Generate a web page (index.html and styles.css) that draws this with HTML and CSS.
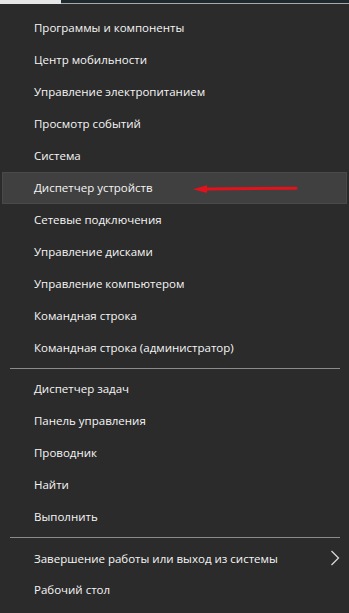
FILE: index.html
```html
<!DOCTYPE html>
<html>
<head>
	<title>Win+X</title>
	<meta charset="utf-8">
	<link rel="stylesheet" href="styles.css">
</head>
<body>
	<div class="top_strip">
		<div class="strip_light"></div>
		<div class="strip_dark"></div>
	</div>
	<div class="menu">
		<div class="group">
			<div class="menu_item">Программы и компоненты</div>
			<div class="menu_item">Центр мобильности</div>
			<div class="menu_item">Управление электропитанием</div>
			<div class="menu_item">Просмотр событий</div>
			<div class="menu_item">Система</div>
			<div class="menu_item active">Диспетчер устройств
				<svg class="arrow" width="110" height="12" viewBox="0 0 110 12">
					<path d="M12 6 L104 5.2" stroke="#e3111b" stroke-width="3" stroke-linecap="round" fill="none"/>
					<path d="M1 6.2 L15 2.2 L15 10 Z" fill="#e3111b"/>
				</svg>
			</div>
			<div class="menu_item">Сетевые подключения</div>
			<div class="menu_item">Управление дисками</div>
			<div class="menu_item">Управление компьютером</div>
			<div class="menu_item">Командная строка</div>
			<div class="menu_item">Командная строка (администратор)</div>
		</div>
		<div class="separator"></div>
		<div class="group">
			<div class="menu_item">Диспетчер задач</div>
			<div class="menu_item">Панель управления</div>
			<div class="menu_item">Проводник</div>
			<div class="menu_item">Найти</div>
			<div class="menu_item">Выполнить</div>
		</div>
		<div class="separator"></div>
		<div class="group">
			<div class="menu_item has_sub">Завершение работы или выход из системы
				<svg class="chevron" width="10" height="16" viewBox="0 0 10 16">
					<polyline points="1.5,1 8.5,8 1.5,15" stroke="#d8d8d8" stroke-width="1.3" fill="none"/>
				</svg>
			</div>
			<div class="menu_item">Рабочий стол</div>
		</div>
	</div>
</body>
</html>
```

FILE: styles.css
```css
*{
	box-sizing:border-box;
	margin:0;
	padding:0;
}
body{
	width:349px;
	height:613px;
	background:#2b2b2b;
	font-family:"Open Sans","Noto Sans",sans-serif;
	color:#f6f6f6;
	overflow:hidden;
}
.top_strip{
	display:flex;
	height:4px;
}
.strip_light{
	width:61px;
	background:#e6e6e6;
}
.strip_dark{
	flex:1;
	background:#1f292d;
	border-bottom:1px solid #a6aaab;
}
.menu{
	padding-top:8px;
}
.menu_item{
	position:relative;
	height:32px;
	line-height:31px;
	padding-left:34px;
	font-size:11.5px;
	white-space:nowrap;
}
.menu_item.active{
	margin:0 2px;
	padding-left:31px;
	background:#404040;
	border:1px solid #4a4a4a;
	line-height:29px;
}
.arrow{
	position:absolute;
	left:189px;
	top:10px;
}
.has_sub{
	display:flex;
	align-items:center;
	justify-content:space-between;
	line-height:normal;
	padding-right:9px;
}
.chevron{
	margin-top:-1px;
}
.separator{
	height:1px;
	margin:4px 9px 4px 10px;
	background:#8b8b8b;
}
```
